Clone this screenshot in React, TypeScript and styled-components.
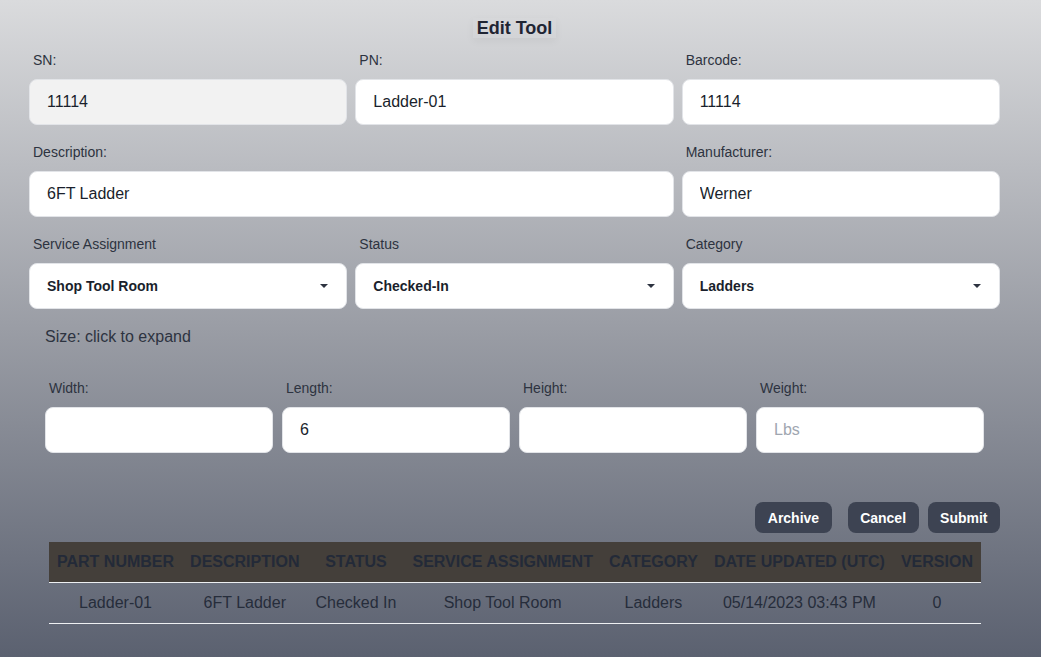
import React from "react";
import styled, { createGlobalStyle } from "styled-components";

const Global = createGlobalStyle`
  html, body { margin: 0; padding: 0; }
  body {
    font-family: "Liberation Sans", Arial, sans-serif;
    background: linear-gradient(to bottom, #dadbdd 0%, #9a9da5 50%, #5b6170 100%);
    min-height: 657px;
  }
  * { box-sizing: border-box; }
`;

const Page = styled.div`
  width: 1041px;
  height: 657px;
  padding: 18px 41px 0 29px;
  overflow: hidden;
`;

const Title = styled.h2`
  margin: 0 auto;
  width: max-content;
  font-family: "Liberation Sans", Arial, sans-serif;
  font-size: 18px;
  line-height: 20px;
  font-weight: 700;
  color: #1f2533;
  padding: 0 4px;
  box-shadow: 0 3px 8px rgba(0, 0, 0, 0.05);
`;

const Grid = styled.div<{ $top: number }>`
  display: grid;
  grid-template-columns: repeat(3, 1fr);
  column-gap: 8px;
  margin-top: ${(p) => p.$top}px;
`;

const Field = styled.div<{ $span?: number }>`
  grid-column: span ${(p) => p.$span ?? 1};
  display: flex;
  flex-direction: column;
`;

const Label = styled.label<{ $indent?: number }>`
  display: block;
  font-family: "Liberation Sans", Arial, sans-serif;
  font-size: 14px;
  line-height: 17px;
  color: #2d3340;
  margin: 0 0 10px ${(p) => p.$indent ?? 4}px;
`;

const Input = styled.input<{ $readonly?: boolean }>`
  height: 46px;
  width: 100%;
  border: 1px solid #e2e4e8;
  border-radius: 8px;
  padding: 0 17px;
  font-family: "Liberation Sans", Arial, sans-serif;
  font-size: 16px;
  color: #1a1f2c;
  background: ${(p) => (p.$readonly ? "#f2f2f2" : "#ffffff")};
  outline: none;
  &::placeholder { color: #a0a6b0; }
`;

const SelectBox = styled.div`
  height: 46px;
  border: 1px solid #e2e4e8;
  border-radius: 8px;
  background: #ffffff;
  padding: 0 18px 0 17px;
  display: flex;
  align-items: center;
  justify-content: space-between;
  font-family: "Liberation Sans", Arial, sans-serif;
  font-size: 14px;
  font-weight: 700;
  color: #1a1f2c;
`;

const Caret = styled.span`
  width: 0;
  height: 0;
  border-left: 4px solid transparent;
  border-right: 4px solid transparent;
  border-top: 4px solid #2d3340;
`;

const SizeToggle = styled.div`
  margin: 19px 0 0 16px;
  font-size: 16px;
  line-height: 18px;
  color: #2d3340;
`;

const SizeGrid = styled.div`
  display: grid;
  grid-template-columns: repeat(4, 1fr);
  column-gap: 9px;
  margin-top: 34px;
  padding: 0 16px;
`;

const Actions = styled.div`
  display: flex;
  justify-content: flex-end;
  margin-top: 49px;
  gap: 9px;
`;

const Button = styled.button<{ $gapAfter?: number }>`
  height: 31px;
  padding: 0 12.5px;
  border: none;
  border-radius: 8px;
  background: #3d4352;
  color: #ffffff;
  font-family: "Liberation Sans", Arial, sans-serif;
  font-size: 14px;
  font-weight: 700;
  margin-right: ${(p) => p.$gapAfter ?? 0}px;
`;

const Table = styled.table`
  margin: 9px 0 0 20px;
  width: 932px;
  border-collapse: collapse;
  font-family: "Liberation Sans", Arial, sans-serif;
`;

const Th = styled.th`
  background: #443f3a;
  height: 40px;
  padding: 0 8px;
  font-size: 16px;
  font-weight: 700;
  text-transform: uppercase;
  color: #232a38;
  text-align: center;
  white-space: nowrap;
  border-bottom: 1px solid #eef0f2;
`;

const Td = styled.td`
  height: 41px;
  padding: 1px 8px 0;
  font-size: 16px;
  color: #262d3b;
  text-align: center;
  white-space: nowrap;
  border-bottom: 1px solid #eef0f2;
`;

const headers = [
  "Part Number",
  "Description",
  "Status",
  "Service Assignment",
  "Category",
  "Date Updated (UTC)",
  "Version",
];

const row = [
  "Ladder-01",
  "6FT Ladder",
  "Checked In",
  "Shop Tool Room",
  "Ladders",
  "05/14/2023 03:43 PM",
  "0",
];

export default function App() {
  return (
    <>
      <Global />
      <Page>
        <Title>Edit Tool</Title>
        <Grid $top={14}>
          <Field>
            <Label>SN:</Label>
            <Input $readonly readOnly defaultValue="11114" />
          </Field>
          <Field>
            <Label>PN:</Label>
            <Input defaultValue="Ladder-01" />
          </Field>
          <Field>
            <Label>Barcode:</Label>
            <Input defaultValue="11114" />
          </Field>
        </Grid>
        <Grid $top={19}>
          <Field $span={2}>
            <Label>Description:</Label>
            <Input defaultValue="6FT Ladder" />
          </Field>
          <Field>
            <Label>Manufacturer:</Label>
            <Input defaultValue="Werner" />
          </Field>
        </Grid>
        <Grid $top={19}>
          <Field>
            <Label>Service Assignment</Label>
            <SelectBox>
              <span>Shop Tool Room</span>
              <Caret />
            </SelectBox>
          </Field>
          <Field>
            <Label>Status</Label>
            <SelectBox>
              <span>Checked-In</span>
              <Caret />
            </SelectBox>
          </Field>
          <Field>
            <Label>Category</Label>
            <SelectBox>
              <span>Ladders</span>
              <Caret />
            </SelectBox>
          </Field>
        </Grid>
        <SizeToggle>Size: click to expand</SizeToggle>
        <SizeGrid>
          <Field>
            <Label>Width:</Label>
            <Input />
          </Field>
          <Field>
            <Label>Length:</Label>
            <Input defaultValue="6" />
          </Field>
          <Field>
            <Label>Height:</Label>
            <Input />
          </Field>
          <Field>
            <Label>Weight:</Label>
            <Input placeholder="Lbs" />
          </Field>
        </SizeGrid>
        <Actions>
          <Button $gapAfter={7}>Archive</Button>
          <Button>Cancel</Button>
          <Button>Submit</Button>
        </Actions>
        <Table>
          <thead>
            <tr>
              {headers.map((h) => (
                <Th key={h}>{h}</Th>
              ))}
            </tr>
          </thead>
          <tbody>
            <tr>
              {row.map((c, i) => (
                <Td key={i}>{c}</Td>
              ))}
            </tr>
          </tbody>
        </Table>
      </Page>
    </>
  );
}
